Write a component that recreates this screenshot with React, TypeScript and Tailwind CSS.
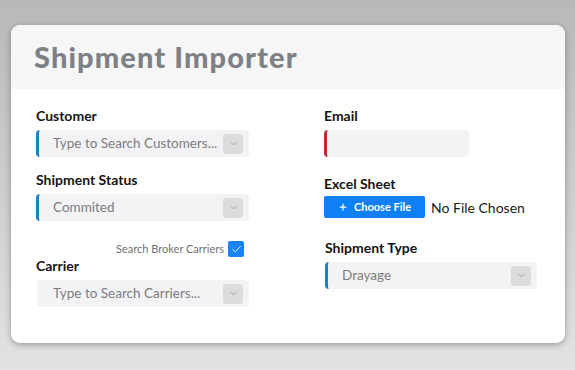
import { Check, ChevronDown, Plus } from "lucide-react";

function SelectBox({
  text,
  width,
  accent,
}: {
  text: string;
  width: string;
  accent?: boolean;
}) {
  return (
    <div
      className={`flex items-center h-[27px] ${width} rounded-[4px] bg-[#f3f3f5] ${
        accent ? "border-l-[3px] border-[#1b7fc8] pl-[14px]" : "pl-[16px]"
      } pr-[6px]`}
    >
      <span className="flex-1 whitespace-nowrap overflow-hidden text-[13.5px] text-[#7c7c80]">
        {text}
      </span>
      <span className="flex items-center justify-center w-[20px] h-[20px] rounded-[3px] bg-[#dcdcde]">
        <ChevronDown className="w-[11px] h-[11px] text-[#8a8a8e]" strokeWidth={1.5} />
      </span>
    </div>
  );
}

function Label({ children, className = "" }: { children: string; className?: string }) {
  return (
    <div className={`text-[14px] leading-[17px] font-bold text-[#141414] ${className}`}>
      {children}
    </div>
  );
}

export default function App() {
  return (
    <div
      className="w-[575px] h-[370px] pt-[25px] pl-[11px] bg-gradient-to-b from-[#b8b8b9] to-[#e2e2e3]"
      style={{ fontFamily: "Lato, 'Noto Sans', sans-serif" }}
    >
      <div className="w-[554px] h-[318px] rounded-[9px] bg-white overflow-hidden shadow-[0_2px_6px_rgba(0,0,0,0.3)]">
        {/* Header */}
        <div className="h-[64px] bg-[#f6f6f6] flex items-center pl-[23px]">
          <h1 className="text-[29px] font-black text-[#7d8186] tracking-[1.1px]">
            Shipment Importer
          </h1>
        </div>

        {/* Form */}
        <div className="flex pt-[18px] pl-[25px]">
          <div className="w-[213px]">
            <Label>Customer</Label>
            <div className="mt-[6px]">
              <SelectBox text="Type to Search Customers..." width="w-[213px]" accent />
            </div>
            <Label className="mt-[14px]">Shipment Status</Label>
            <div className="mt-[6px]">
              <SelectBox text="Commited" width="w-[213px]" accent />
            </div>
            <div className="mt-[20px] flex items-center justify-end gap-[4px] pr-[5px] h-[16px]">
              <span className="text-[11px] text-[#6f6f73]">Search Broker Carriers</span>
              <span className="flex items-center justify-center w-[16px] h-[16px] rounded-[2px] bg-[#1683f8]">
                <Check className="w-[11px] h-[11px] text-white" strokeWidth={2} />
              </span>
            </div>
            <Label>Carrier</Label>
            <div className="mt-[6px] ml-[1px]">
              <SelectBox text="Type to Search Carriers..." width="w-[212px]" />
            </div>
          </div>

          <div className="ml-[75px]">
            <Label>Email</Label>
            <div className="mt-[6px] w-[145px] h-[27px] rounded-[4px] bg-[#f3f3f5] border-l-[3px] border-[#c6262d]" />
            <Label className="mt-[18px]">Excel Sheet</Label>
            <div className="mt-[4px] flex items-center gap-[6px]">
              <button className="flex items-center justify-center gap-[6px] w-[101px] h-[22px] rounded-[2px] bg-[#0f7ff6] text-white text-[11px] font-bold">
                <Plus className="w-[10px] h-[10px]" strokeWidth={3} />
                Choose File
              </button>
              <span className="text-[14px] text-[#1a1a1a]">No File Chosen</span>
            </div>
            <Label className="mt-[21px] ml-[1px]">Shipment Type</Label>
            <div className="mt-[6px] ml-[1px]">
              <SelectBox text="Drayage" width="w-[212px]" accent />
            </div>
          </div>
        </div>
      </div>
    </div>
  );
}
